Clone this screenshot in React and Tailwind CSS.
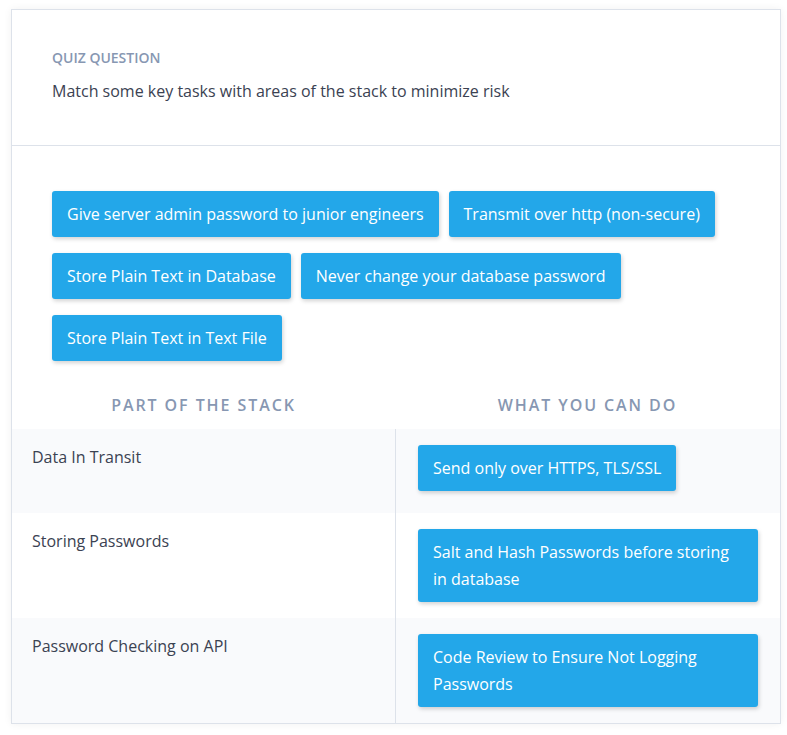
// Quiz card: match tasks to areas of the stack

const pile = [
  "Give server admin password to junior engineers",
  "Transmit over http (non-secure)",
  "Store Plain Text in Database",
  "Never change your database password",
  "Store Plain Text in Text File",
];

const rows = [
  { part: "Data In Transit", action: "Send only over HTTPS, TLS/SSL", shaded: true },
  { part: "Storing Passwords", action: "Salt and Hash Passwords before storing in database", shaded: false },
  { part: "Password Checking on API", action: "Code Review to Ensure Not Logging Passwords", shaded: true },
];

const Chip = ({ children }) => (
  <div className="inline-block max-w-full rounded-[3px] bg-[#23a7e9] px-[15px] py-[9.5px] text-[16px] leading-[27px] text-white shadow-[1px_2px_4px_rgba(0,0,0,0.18)]">
    {children}
  </div>
);

function App() {
  return (
    <div
      className="min-h-screen bg-white pt-[9px] pl-[11px] pr-[6px]"
      style={{ fontFamily: '"Open Sans", "Noto Sans", sans-serif' }}
    >
      <div className="w-[770px] border border-[#dde2ea] bg-white shadow-[0_0_8px_rgba(0,0,0,0.06)]">
        <div className="border-b border-[#dde2ea] px-[40px] pt-[38px] pb-[42px]">
          <div className="text-[14px] font-semibold uppercase leading-[20px] text-[#8797b2]">Quiz Question</div>
          <div className="mt-[11px] text-[16px] leading-[24px] text-[#3b4252]">
            Match some key tasks with areas of the stack to minimize risk
          </div>
        </div>

        <div className="flex flex-wrap gap-x-[10px] gap-y-[16px] px-[40px] pt-[45px] pb-[20px]">
          {pile.map((p) => (
            <Chip key={p}>{p}</Chip>
          ))}
        </div>

        <div className="grid grid-cols-[383px_1fr]">
          <div className="flex h-[48px] items-center justify-center text-[16px] font-semibold uppercase tracking-[0.12em] text-[#8797b2]">
            Part of the Stack
          </div>
          <div className="flex h-[48px] items-center justify-center text-[16px] font-semibold uppercase tracking-[0.12em] text-[#8797b2]">
            What you can do
          </div>
        </div>

        {rows.map((r, i) => (
          <div
            key={r.part}
            className={`grid grid-cols-[383px_1fr] ${r.shaded ? "bg-[#f9fafc]" : "bg-white"} ${i === 0 ? "min-h-[84px]" : ""}`}
          >
            <div className="px-[20px] py-[16px] text-[16px] leading-[24px] text-[#3b4252]">{r.part}</div>
            <div className="border-l border-[#dde2ea] px-[22px] py-[16px]">
              <Chip>{r.action}</Chip>
            </div>
          </div>
        ))}
      </div>
    </div>
  );
}

export default App;
